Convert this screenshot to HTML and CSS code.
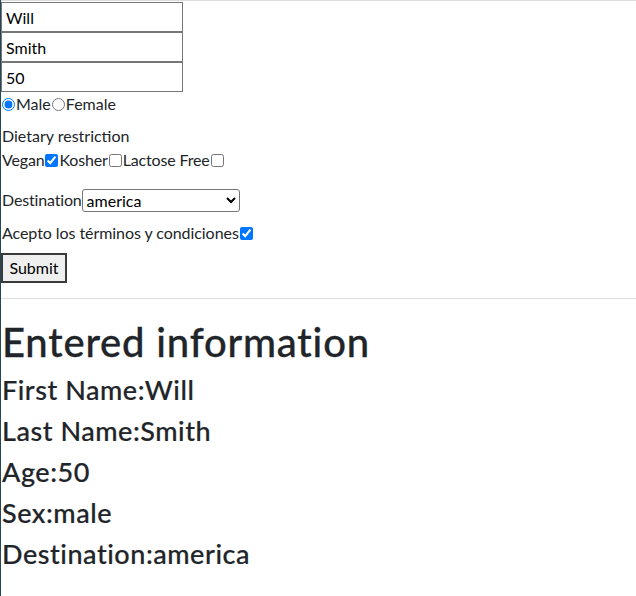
FILE: index.html
```html
<!DOCTYPE html>
<html lang="en">
<head>
<meta charset="utf-8">
<title>Form</title>
<link rel="stylesheet" href="styles.css">
</head>
<body>
<div class="page">
  <hr class="topline">
  <form class="form">
    <input class="field" type="text" value="Will">
    <input class="field" type="text" value="Smith">
    <input class="field" type="text" value="50">
    <div class="row"><input class="radio" type="radio" name="sex" checked>Male<input class="radio" type="radio" name="sex">Female</div>
    <div class="label">Dietary restriction</div>
    <div class="row diet">Vegan<input class="check" type="checkbox" checked>Kosher<input class="check" type="checkbox">Lactose Free<input class="check" type="checkbox"></div>
    <div class="row dest">Destination<select class="select"><option>america</option></select></div>
    <div class="row terms">Acepto los términos y condiciones<input class="check" type="checkbox" checked></div>
    <button class="submit" type="button">Submit</button>
  </form>
  <hr class="divider">
  <h1 class="title">Entered information</h1>
  <h2 class="info">First Name:Will</h2>
  <h2 class="info">Last Name:Smith</h2>
  <h2 class="info">Age:50</h2>
  <h2 class="info">Sex:male</h2>
  <h2 class="info">Destination:america</h2>
</div>
</body>
</html>
```
FILE: styles.css
```css
html, body {
  margin: 0;
  padding: 0;
  background: #fff;
}
body {
  font-family: Lato, "Liberation Sans", sans-serif;
  font-size: 16px;
  line-height: 1.5;
  color: #212529;
}
.page {
  border-left: 1px solid #24485a;
  min-height: 596px;
  box-sizing: border-box;
}
.topline {
  margin: 0 0 1px 0;
  border: 0;
  border-top: 1px solid #dcdcdc;
  height: 0;
}
.form {
  display: flex;
  flex-direction: column;
  align-items: flex-start;
}
.field {
  display: block;
  width: 182px;
  height: 30px;
  box-sizing: border-box;
  margin: 0;
  padding: 1px 4px;
  font: inherit;
  color: #000;
  border: 1px solid #767676;
  border-radius: 0;
  background: #fff;
}
.row {
  display: flex;
  align-items: center;
  height: 24px;
  white-space: nowrap;
}
.diet, .dest {
  letter-spacing: -0.01em;
}
.radio {
  width: 13px;
  height: 13px;
  margin: 0 1px 0 1px;
}
.check {
  width: 13px;
  height: 13px;
  margin: 0 1px 0 1px;
}
.label {
  margin-top: 8px;
  margin-left: 1px;
  height: 24px;
}
.row:not(:first-of-type) { padding-left: 1px; }
.dest {
  margin-top: 16px;
}
.select {
  width: 158px;
  height: 23px;
  margin: 0;
  font: inherit;
  font-size: 16px;
  line-height: 1;
  padding: 0;
  color: #000;
  border: 1px solid #767676;
  border-radius: 3px;
  background: #fff;
  letter-spacing: 0;
}
.terms {
  margin-top: 9px;
  letter-spacing: -0.004em;
}
.submit {
  margin-top: 8px;
  height: 30px;
  width: 66px;
  padding: 1px 6px;
  font: inherit;
  color: #000;
  background: #efefef;
  border: 2px solid #3a3a3a;
  border-radius: 0;
}
.divider {
  margin: 15px 0 19px 0;
  border: 0;
  border-top: 1px solid #dfdfdf;
  height: 0;
}
.title {
  margin: 0 0 7px 1px;
  font-size: 40px;
  font-weight: 500;
  line-height: 1.2;
  letter-spacing: 0.02em;
  -webkit-text-stroke: 0.3px #212529;
}
.info {
  margin: 0 0 8px 1px;
  font-size: 27px;
  font-weight: 500;
  line-height: 33px;
  letter-spacing: 0.02em;
  -webkit-text-stroke: 0.2px #212529;
}
```
